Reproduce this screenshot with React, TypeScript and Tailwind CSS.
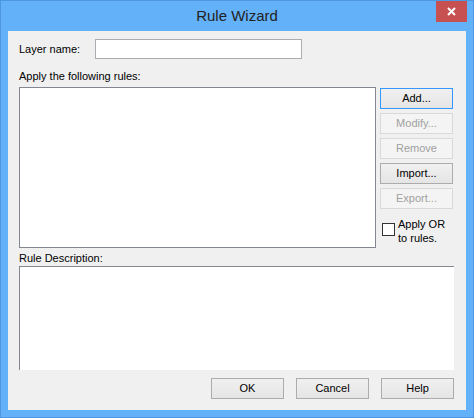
import React from "react";

const font = { fontFamily: '"Liberation Sans", Arial, sans-serif' };

function Btn({ children, disabled, focused, className = "" }: { children: React.ReactNode; disabled?: boolean; focused?: boolean; className?: string }) {
  const base = "h-[21px] w-[73px] flex items-center justify-center text-[11px] leading-none border";
  const look = disabled
    ? "border-[#d9d9d9] bg-[#f4f4f4] text-[#a0a0a0]"
    : focused
    ? "border-[#3399ff] bg-gradient-to-b from-[#f0f0f0] to-[#e5e5e5] text-black"
    : "border-[#acacac] bg-gradient-to-b from-[#f0f0f0] to-[#e5e5e5] text-black";
  return <div className={`${base} ${look} ${className}`}>{children}</div>;
}

export default function App() {
  return (
    <div style={font} className="relative w-[474px] h-[418px] bg-[#63b1f8] border border-[#4f97e0] flex flex-col">
      <div className="h-[30px] flex items-center justify-center text-[15px] text-[#222] pt-[1px]">Rule Wizard</div>
      <div className="absolute top-0 right-[6px] w-[31px] h-[21px] bg-[#c75050] flex items-center justify-center">
        <svg width="9" height="9" viewBox="0 0 9 9">
          <path d="M1 1 L8 8 M8 1 L1 8" stroke="white" strokeWidth="2" />
        </svg>
      </div>
      <div className="mx-[7px] w-[458px] h-[379px] bg-[#f0f0f0] flex flex-col pl-[11px] text-[11px] text-black">
        <div className="mt-[8px] flex items-center h-[20px]">
          <div className="w-[76px]">Layer name:</div>
          <div className="w-[207px] h-[20px] bg-white border border-[#abadb3]" />
        </div>
        <div className="mt-[10px] h-[14px] leading-[14px]">Apply the following rules:</div>
        <div className="mt-[4px] flex">
          <div className="w-[357px] h-[161px] bg-white border border-[#828790]" />
          <div className="ml-[4px] mt-[1px] flex flex-col">
            <div className="flex flex-col gap-[4px]">
              <Btn focused>Add...</Btn>
              <Btn disabled>Modify...</Btn>
              <Btn disabled>Remove</Btn>
              <Btn>Import...</Btn>
              <Btn disabled>Export...</Btn>
            </div>
            <div className="mt-[8px] flex items-start">
              <div className="mt-[6px] ml-[2px] w-[13px] h-[13px] bg-white border border-[#333]" />
              <div className="ml-[3px] text-[11px] leading-[14px]">
                Apply OR
                <br />
                to rules.
              </div>
            </div>
          </div>
        </div>
        <div className="mt-[3px] h-[14px] leading-[14px]">Rule Description:</div>
        <div className="mt-[1px] w-[435px] h-[104px] bg-white border-t border-l border-[#828790]" />
        <div className="mt-[8px] flex justify-end gap-[12px] pr-[12px]">
          <Btn>OK</Btn>
          <Btn>Cancel</Btn>
          <Btn>Help</Btn>
        </div>
      </div>
    </div>
  );
}
